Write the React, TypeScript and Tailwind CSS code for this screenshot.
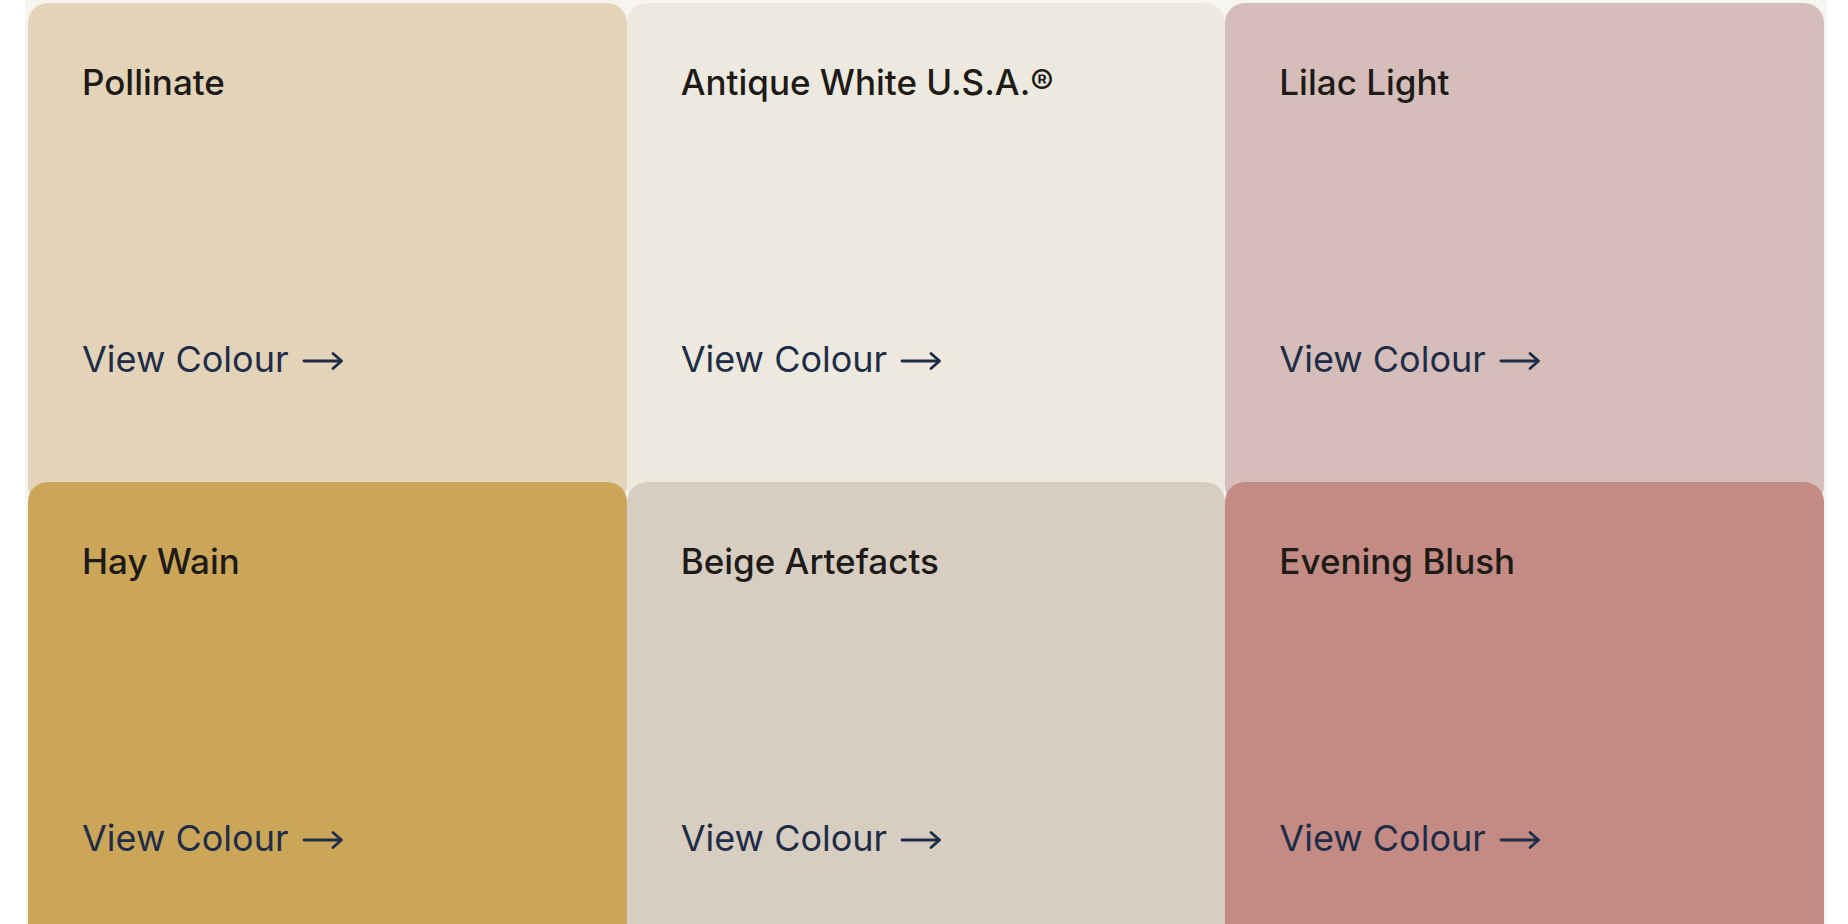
import React from "react";

type Swatch = { name: string; bg: string; second: boolean };

const swatches: Swatch[] = [
  { name: "Pollinate", bg: "bg-[#e3d3b9]", second: false },
  { name: "Antique White U.S.A.®", bg: "bg-[#eee9de]", second: false },
  { name: "Lilac Light", bg: "bg-[#d5beb9]", second: false },
  { name: "Hay Wain", bg: "bg-[#cca658]", second: true },
  { name: "Beige Artefacts", bg: "bg-[#d7cec1]", second: true },
  { name: "Evening Blush", bg: "bg-[#c38b84]", second: true },
];

function Arrow() {
  return (
    <svg
      width="42"
      height="20"
      viewBox="0 0 42 20"
      fill="none"
      stroke="#1f2c47"
      strokeWidth="2.8"
      strokeLinecap="round"
      strokeLinejoin="round"
      className="mt-[10px] shrink-0"
    >
      <path d="M2 10 H39" />
      <path d="M31 2.5 L39.5 10 L31 17.5" />
    </svg>
  );
}

function Card({ s }: { s: Swatch }) {
  return (
    <div
      className={
        "flex h-[503px] flex-col rounded-[20px] pl-[54px] pt-[62px] " +
        s.bg +
        (s.second ? " -mt-[24px]" : "")
      }
    >
      <div className="text-[35px] font-medium leading-[35px] text-[#1d1a17]">
        {s.name}
      </div>
      <a
        className="mt-[241px] flex items-start gap-[13px] text-[36px] leading-[36px] text-[#1f2c47]"
        href="#"
      >
        <span>View Colour</span>
        <Arrow />
      </a>
    </div>
  );
}

export default function App() {
  return (
    <div
      className="min-h-[924px] overflow-hidden bg-white pl-[25px]"
      style={{ fontFamily: "Inter, 'Noto Sans', sans-serif" }}
    >
      <div className="w-[1802px] bg-[#f7f5f0] px-[3px] pt-[3px]">
        <div className="grid grid-cols-3">
          {swatches.map((s) => (
            <Card key={s.name} s={s} />
          ))}
        </div>
      </div>
    </div>
  );
}
